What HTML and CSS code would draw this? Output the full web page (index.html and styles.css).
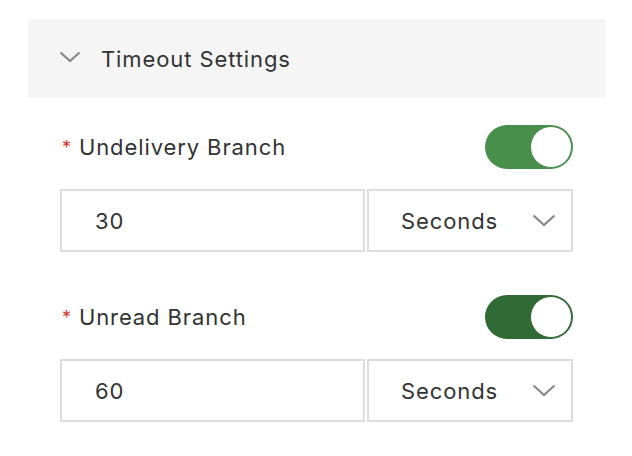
FILE: index.html
```html
<!DOCTYPE html>
<html>
<head>
<meta charset="utf-8">
<link rel="stylesheet" href="styles.css">
</head>
<body>
<div class="panel">
  <div class="header">
    <svg class="chev" width="22" height="12" viewBox="0 0 22 12"><path d="M1.5 1.5 L11 10 L20.5 1.5" fill="none" stroke="#888" stroke-width="2.2"/></svg>
    <span class="title">Timeout Settings</span>
  </div>
  <div class="body">
    <div class="group">
      <div class="label-row">
        <div class="label"><span class="req">*</span>Undelivery Branch</div>
        <div class="toggle on"><div class="knob"></div></div>
      </div>
      <div class="inputs">
        <div class="num">30</div>
        <div class="select"><span>Seconds</span><svg width="24" height="13" viewBox="0 0 24 13"><path d="M1.5 1.5 L12 11 L22.5 1.5" fill="none" stroke="#888" stroke-width="2.2"/></svg></div>
      </div>
    </div>
    <div class="group">
      <div class="label-row">
        <div class="label"><span class="req">*</span>Unread Branch</div>
        <div class="toggle on dark"><div class="knob"></div></div>
      </div>
      <div class="inputs">
        <div class="num">60</div>
        <div class="select"><span>Seconds</span><svg width="24" height="13" viewBox="0 0 24 13"><path d="M1.5 1.5 L12 11 L22.5 1.5" fill="none" stroke="#888" stroke-width="2.2"/></svg></div>
      </div>
    </div>
  </div>
</div>
</body>
</html>
```

FILE: styles.css
```css
* { box-sizing: border-box; }
html, body { margin: 0; padding: 0; background: #fff; }
body { font-family: Inter, "Noto Sans", sans-serif; color: #333; letter-spacing: 0.9px; }
.panel { margin: 19px 0 0 28px; width: 578px; }
.header {
  height: 79px;
  background: #f5f5f5;
  display: flex;
  align-items: center;
  padding-left: 31px;
}
.chev { margin-right: 20px; margin-top: -4px; }
.title { font-size: 22px; color: #333; }
.body { padding: 27px 33px 0 32px; }
.group + .group { margin-top: 43px; }
.label-row {
  display: flex;
  justify-content: space-between;
  align-items: center;
  height: 44px;
}
.label { font-size: 22px; color: #333; padding-left: 2px; display: flex; align-items: center; }
.req { color: #d9362b; font-size: 18px; margin-right: 7px; }
.toggle {
  width: 88px; height: 44px;
  border-radius: 22px;
  background: #478f4a;
  position: relative;
}
.toggle.dark { background: #306b36; }
.knob {
  position: absolute;
  right: 1px; top: 1px;
  width: 42px; height: 42px;
  border-radius: 50%;
  background: #fff;
  border: 1.5px solid #478f4a;
}
.toggle.dark .knob { border-color: #306b36; }
.inputs { display: flex; margin-top: 20px; height: 63px; gap: 2px; }
.num {
  width: 305px;
  border: 2px solid #ddd;
  display: flex; align-items: center;
  padding-left: 33px;
  font-size: 22px;
}
.select {
  flex: 1;
  border: 2px solid #ddd;
  display: flex; align-items: center; justify-content: space-between;
  padding: 0 15px 0 32px;
  font-size: 22px;
}
```
